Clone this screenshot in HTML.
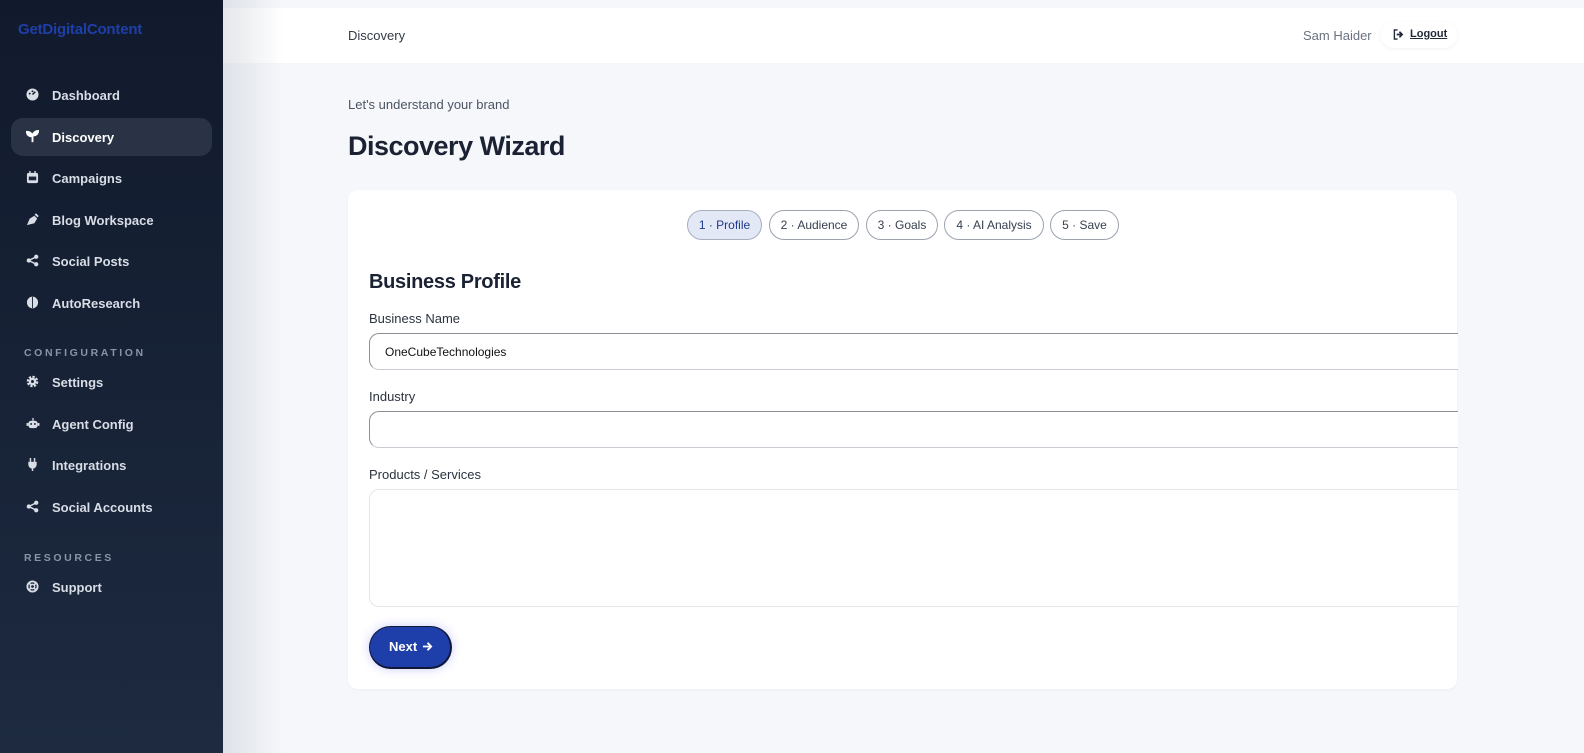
<!DOCTYPE html>
<html><head><style>
*{box-sizing:border-box;margin:0;padding:0}
body{width:1584px;height:753px;overflow:hidden;font-family:"Liberation Sans",sans-serif;background:#f5f7fb;position:relative}
.sb{position:absolute;left:0;top:0;width:223px;height:753px;background:linear-gradient(#111a2c,#1d2a40);z-index:3}
.logo{position:absolute;left:18px;top:21px;color:#1f3fa8;font-size:15px;font-weight:bold;letter-spacing:-0.2px}
.it{position:absolute;left:11px;width:201px;height:38px;border-radius:12px;color:#d8dde6;font-size:13px;font-weight:bold;display:flex;align-items:center;padding-left:41px}
.it.act{background:#2a3346;color:#fff}
.it svg{position:absolute;left:15px;top:12px}
.sec{position:absolute;left:24px;color:#8a94a6;font-size:10.5px;font-weight:bold;letter-spacing:2.6px}
.shadow{position:absolute;left:223px;top:0;width:60px;height:753px;background:linear-gradient(90deg,rgba(180,185,195,.35),rgba(245,247,251,0));z-index:2}
.hdr{position:absolute;left:223px;top:8px;right:0;height:55px;background:#fff}
.hdr .t{position:absolute;left:125px;top:20px;font-size:13px;color:#333b47}
.user{position:absolute;left:1303px;top:28px;font-size:13px;color:#6b7280}
.lo{position:absolute;left:1381px;top:22px;width:76px;height:26px;border-radius:13px;background:#fff;box-shadow:0 1px 4px rgba(0,0,0,.06);font-size:11px;font-weight:bold;color:#1f2937;padding:6px 0 0 29px;text-decoration:underline}
.sub{position:absolute;left:348px;top:97px;font-size:13px;color:#4b5563}
h1{position:absolute;left:348px;top:131px;font-size:27px;color:#1a2233;font-weight:bold;letter-spacing:-0.5px}
.card{position:absolute;left:348px;top:190px;width:1109px;height:499px;background:#fff;border-radius:10px;box-shadow:0 1px 3px rgba(0,0,0,.04)}
.pill{position:absolute;top:210px;height:30px;border-radius:15px;border:1px solid #9ca3af;border-width:1px 1.5px 1.5px 1px;font-size:12px;color:#374151;padding-top:7px;text-align:center;background:#fff}
.pill.a{background:#e3e8f6;color:#1e3a8a;border-color:#a6aec0}
h2{position:absolute;left:369px;top:271px;font-size:20px;color:#1a2233;font-weight:bold;letter-spacing:-0.3px}
.lbl{position:absolute;left:369px;font-size:13px;color:#2b3340}
.in{position:absolute;left:369px;width:1089px;border:1px solid #c9ccd2;border-top-color:#8b8f96;border-left-color:#8b8f96;border-right:none;border-radius:10px 0 0 10px;background:#fff;font-size:12px;color:#111;padding-left:15px}
.ta{border:1px solid #e2e5ea;border-right:none}
.btn{position:absolute;left:369px;top:626px;width:83px;height:43px;border-radius:22px;background:#1e3eaa;border:2px solid #10183a;border-width:1px 2px 2px 1px;color:#fff;font-weight:bold;font-size:13px;padding:12px 0 0 19px;box-shadow:0 0 10px rgba(80,90,240,.3)}
</style></head><body>
<div class="sb">
<div class="logo">GetDigitalContent</div>
<div class="it" style="top:76px"><svg width="13" height="13" viewBox="0 0 14 14"><circle cx="7" cy="7" r="6.5" fill="#d8dde6"/><path d="M7 7l3-3" stroke="#111a2c" stroke-width="1.6"/><circle cx="4" cy="6" r="1" fill="#111a2c"/><circle cx="7" cy="3.5" r="1" fill="#111a2c"/></svg>Dashboard</div>
<div class="it act" style="top:118px"><svg width="13" height="13" viewBox="0 0 14 14"><path d="M7 13V6M7 6C5 2 2 2 1 2c0 3 2 5 6 5M7 6c1-3 3-5 6-5 0 3-2 5-6 5" stroke="#fff" stroke-width="2" fill="#fff"/></svg>Discovery</div>
<div class="it" style="top:159px"><svg width="13" height="13" viewBox="0 0 14 14"><rect x="1" y="2" width="12" height="11" rx="2" fill="#d8dde6"/><rect x="3" y="6" width="8" height="4" fill="#1a2338"/><rect x="3.5" y="0" width="1.5" height="3" fill="#d8dde6"/><rect x="9" y="0" width="1.5" height="3" fill="#d8dde6"/></svg>Campaigns</div>
<div class="it" style="top:201px"><svg width="13" height="13" viewBox="0 0 14 14"><path d="M1 13L4 6l5-3 3 3-3 5z" fill="#d8dde6"/><path d="M10 1l3 3" stroke="#d8dde6" stroke-width="2"/></svg>Blog Workspace</div>
<div class="it" style="top:242px"><svg width="13" height="13" viewBox="0 0 14 14"><circle cx="3" cy="7" r="2.3" fill="#d8dde6"/><circle cx="11" cy="3" r="2.3" fill="#d8dde6"/><circle cx="11" cy="11" r="2.3" fill="#d8dde6"/><path d="M3 7L11 3M3 7l8 4" stroke="#d8dde6" stroke-width="1.6"/></svg>Social Posts</div>
<div class="it" style="top:284px"><svg width="13" height="13" viewBox="0 0 14 14"><ellipse cx="7" cy="7" rx="6" ry="6.3" fill="#d8dde6"/><path d="M7 1v12" stroke="#1a2338" stroke-width="1"/></svg>AutoResearch</div>
<div class="sec" style="top:347px">CONFIGURATION</div>
<div class="it" style="top:363px"><svg width="13" height="13" viewBox="0 0 14 14"><circle cx="7" cy="7" r="4.5" fill="none" stroke="#d8dde6" stroke-width="3.5" stroke-dasharray="2.2 1.3"/><circle cx="7" cy="7" r="4" fill="#d8dde6"/><circle cx="7" cy="7" r="1.6" fill="#1a2338"/></svg>Settings</div>
<div class="it" style="top:405px"><svg width="14" height="13" viewBox="0 0 14 14"><rect x="2" y="4" width="10" height="8" rx="3" fill="#d8dde6"/><rect x="0" y="6.5" width="2" height="3" fill="#d8dde6"/><rect x="12" y="6.5" width="2" height="3" fill="#d8dde6"/><rect x="6.3" y="1" width="1.4" height="3" fill="#d8dde6"/><circle cx="5" cy="7.5" r="1" fill="#1a2338"/><circle cx="9" cy="7.5" r="1" fill="#1a2338"/></svg>Agent Config</div>
<div class="it" style="top:446px"><svg width="13" height="13" viewBox="0 0 14 14"><rect x="4" y="0" width="1.6" height="4" fill="#d8dde6"/><rect x="8.4" y="0" width="1.6" height="4" fill="#d8dde6"/><path d="M2.5 4h9v3a4.5 4.5 0 0 1-9 0z" fill="#d8dde6"/><rect x="6.2" y="10" width="1.6" height="4" fill="#d8dde6"/></svg>Integrations</div>
<div class="it" style="top:488px"><svg width="13" height="13" viewBox="0 0 14 14"><circle cx="3" cy="7" r="2.3" fill="#d8dde6"/><circle cx="11" cy="3" r="2.3" fill="#d8dde6"/><circle cx="11" cy="11" r="2.3" fill="#d8dde6"/><path d="M3 7L11 3M3 7l8 4" stroke="#d8dde6" stroke-width="1.6"/></svg>Social Accounts</div>
<div class="sec" style="top:552px">RESOURCES</div>
<div class="it" style="top:568px"><svg width="13" height="13" viewBox="0 0 14 14"><circle cx="7" cy="7" r="5.5" fill="none" stroke="#d8dde6" stroke-width="2"/><circle cx="7" cy="7" r="2.3" fill="none" stroke="#d8dde6" stroke-width="1.6"/><path d="M3 3l2.5 2.5M11 3L8.5 5.5M3 11l2.5-2.5M11 11L8.5 8.5" stroke="#d8dde6" stroke-width="1.8"/></svg>Support</div>
</div>
<div class="hdr"><div class="t">Discovery</div></div>
<div class="shadow"></div>
<div class="user">Sam Haider</div>
<div class="lo"><svg style="position:absolute;left:12px;top:7px" width="11" height="11" viewBox="0 0 12 12"><path d="M5 1H1.5v10H5" stroke="#1f2937" stroke-width="1.5" fill="none"/><path d="M4 6h5M7 3l3 3-3 3" stroke="#1f2937" stroke-width="1.8" fill="none"/></svg>Logout</div>
<div class="sub">Let's understand your brand</div>
<h1>Discovery Wizard</h1>
<div class="card"></div>
<div class="pill a" style="left:687px;width:75px">1 · Profile</div>
<div class="pill" style="left:769px;width:90px">2 · Audience</div>
<div class="pill" style="left:866px;width:72px">3 · Goals</div>
<div class="pill" style="left:944px;width:100px">4 · AI Analysis</div>
<div class="pill" style="left:1050px;width:69px">5 · Save</div>
<h2>Business Profile</h2>
<div class="lbl" style="top:311px">Business Name</div>
<div class="in" style="top:333px;height:37px;padding-top:11px">OneCubeTechnologies</div>
<div class="lbl" style="top:389px">Industry</div>
<div class="in" style="top:411px;height:37px"></div>
<div class="lbl" style="top:467px">Products / Services</div>
<div class="in ta" style="top:489px;height:118px"></div>
<div class="btn">Next <svg style="position:absolute;left:52px;top:14px" width="11" height="11" viewBox="0 0 12 12"><path d="M1 6h9M6 2l4 4-4 4" stroke="#fff" stroke-width="2" fill="none"/></svg></div>
</body></html>
